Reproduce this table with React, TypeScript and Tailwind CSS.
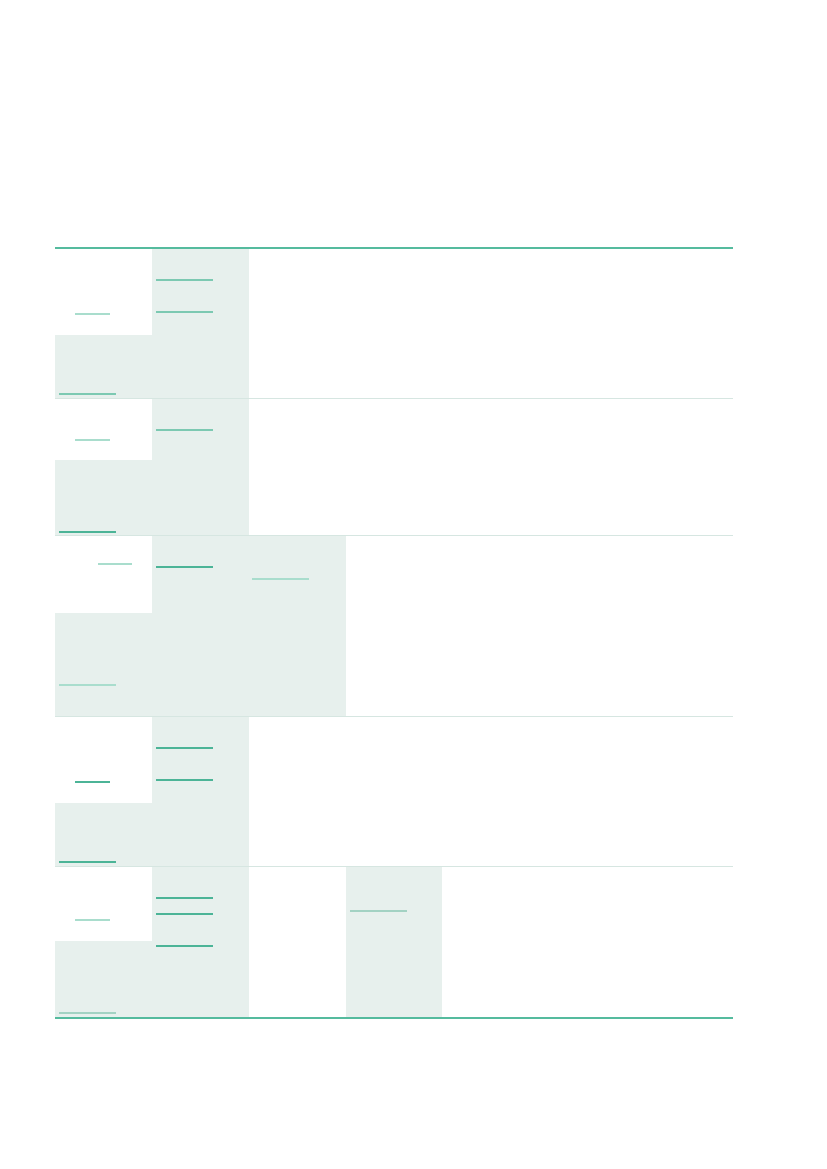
import React from 'react';

type Bar = { y: number; x?: number; w?: number; tone: string };

type Row = {
  h: number;
  top: number; // height of the white part in the first column
  lead: Bar;
  foot: Bar;
  second: Bar[]; // y measured from the top of the row
  extra?: { col: 3 | 4; bar: Bar };
};

const bright = 'bg-[#4cb497]';
const mid = 'bg-[#7cc9b2]';
const light = 'bg-[#a9ddcd]';
const grey = 'bg-[#a3d2c3]';

const rows: Row[] = [
  {
    h: 150,
    top: 86,
    lead: { y: 64, x: 20, w: 35, tone: light },
    foot: { y: 58, tone: mid },
    second: [
      { y: 30, tone: mid },
      { y: 62, tone: mid },
    ],
  },
  {
    h: 137,
    top: 61,
    lead: { y: 40, x: 20, w: 35, tone: light },
    foot: { y: 71, tone: bright },
    second: [{ y: 30, tone: mid }],
  },
  {
    h: 181,
    top: 77,
    lead: { y: 27, x: 43, w: 34, tone: light },
    foot: { y: 71, tone: light },
    second: [{ y: 30, tone: bright }],
    extra: { col: 3, bar: { y: 42, x: 3, tone: light } },
  },
  {
    h: 150,
    top: 86,
    lead: { y: 64, x: 20, w: 35, tone: bright },
    foot: { y: 58, tone: bright },
    second: [
      { y: 30, tone: bright },
      { y: 62, tone: bright },
    ],
  },
  {
    h: 150,
    top: 74,
    lead: { y: 52, x: 20, w: 35, tone: light },
    foot: { y: 71, tone: grey },
    second: [
      { y: 30, tone: bright },
      { y: 46, tone: bright },
      { y: 78, tone: bright },
    ],
    extra: { col: 4, bar: { y: 43, x: 4, tone: grey } },
  },
];

const Line = ({ bar, gap }: { bar: Bar; gap?: number }) => (
  <div
    className={`h-[2px] shrink-0 ${bar.tone}`}
    style={{ marginTop: gap ?? bar.y, marginLeft: bar.x ?? 4, width: bar.w ?? 57 }}
  />
);

const TableRow = ({ row, last }: { row: Row; last: boolean }) => (
  <div
    className={`grid grid-cols-7 ${last ? '' : 'border-b border-[#d6e6e1]'}`}
    style={{ height: row.h }}
  >
    <div className="flex flex-col">
      <div className="flex flex-col bg-white" style={{ height: row.top }}>
        <Line bar={row.lead} />
      </div>
      <div className="flex flex-1 flex-col bg-[#e7f0ed]">
        <Line bar={row.foot} />
      </div>
    </div>
    <div className="flex flex-col bg-[#e7f0ed]">
      {row.second.map((b, i) => (
        <Line key={i} bar={b} gap={i === 0 ? b.y : b.y - row.second[i - 1].y - 2} />
      ))}
    </div>
    <div className={`flex flex-col ${row.extra?.col === 3 ? 'bg-[#e7f0ed]' : ''}`}>
      {row.extra?.col === 3 && <Line bar={row.extra.bar} />}
    </div>
    <div className={`flex flex-col ${row.extra?.col === 4 ? 'bg-[#e7f0ed]' : ''}`}>
      {row.extra?.col === 4 && <Line bar={row.extra.bar} />}
    </div>
    <div />
    <div />
    <div />
  </div>
);

export default function App() {
  return (
    <div className="min-h-[1169px] w-[827px] bg-white pt-[247px] pl-[55px]">
      <div className="w-[678px] border-y-2 border-[#55bb9e]">
        {rows.map((r, i) => (
          <TableRow key={i} row={r} last={i === rows.length - 1} />
        ))}
      </div>
    </div>
  );
}
